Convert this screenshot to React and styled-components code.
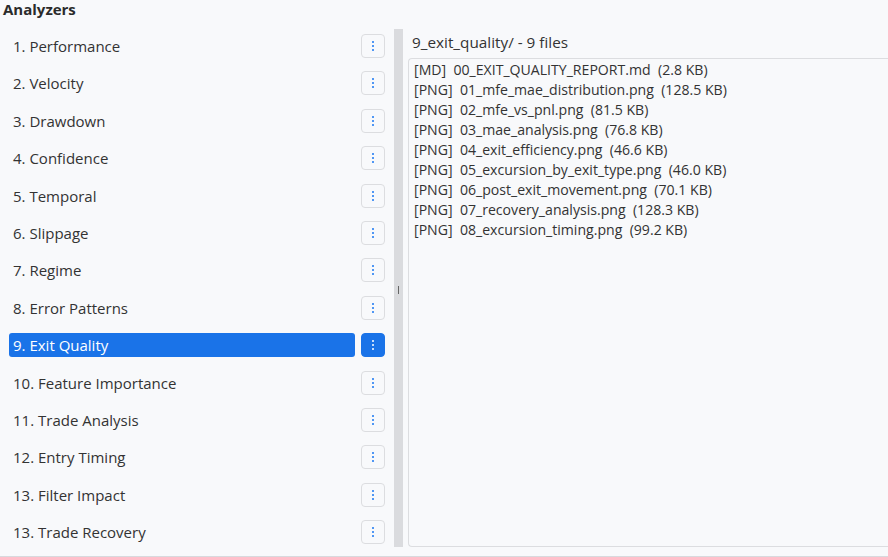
import React, { useState } from 'react';
import styled, { createGlobalStyle } from 'styled-components';

const GlobalStyle = createGlobalStyle`
    html, body { margin: 0; padding: 0; }
    body {
        background: #f8f9fb;
        font-family: "Open Sans", "Noto Sans", sans-serif;
        color: #333;
    }
`

const Page = styled.div`
    height: 557px;
    box-sizing: border-box;
    border-bottom: 1px solid #d8d9dd;
    background: #f8f9fb;
    overflow: hidden;
`

const Heading = styled.h2`
    margin: 0;
    padding: 1px 0 0 3px;
    font-size: 15px;
    font-weight: 700;
    line-height: 16px;
    height: 28px;
    color: #2b2b2b;
`

const Body = styled.div`
    display: flex;
    height: 518px;
`

const Sidebar = styled.div`
    width: 394px;
    box-sizing: border-box;
    padding: 5px 9px 0 9px;
    display: flex;
    flex-direction: column;
    gap: 13.4px;
`

const Row = styled.div`
    display: flex;
    align-items: center;
    gap: 6px;
    height: 24px;
`

const Item = styled.div`
    flex: 1;
    height: 24px;
    line-height: 24px;
    padding-left: 4px;
    border-radius: 3px;
    font-size: 15px;
    cursor: pointer;
    background: ${p => p.$active ? '#1a73e8' : 'transparent'};
    color: ${p => p.$active ? '#fff' : '#333'};
`

const MenuButton = styled.button`
    width: 24px;
    height: 24px;
    padding: 0;
    box-sizing: border-box;
    border-radius: 4px;
    border: 1px solid ${p => p.$active ? '#1a73e8' : '#dcdde0'};
    background: ${p => p.$active ? '#1a73e8' : '#f8f9fb'};
    display: flex;
    align-items: center;
    justify-content: center;
    cursor: pointer;
`

const Splitter = styled.div`
    width: 9px;
    background: #dadbde;
    display: flex;
    align-items: center;
    justify-content: center;
`

const Grip = styled.div`
    width: 1px;
    height: 8px;
    background: #666;
    margin-top: 4px;
`

const Content = styled.div`
    flex: 1;
    padding-left: 5px;
    display: flex;
    flex-direction: column;
    min-width: 0;
`

const FolderTitle = styled.div`
    height: 29px;
    line-height: 26px;
    padding-left: 4px;
    font-size: 15.3px;
    color: #333;
`

const FileBox = styled.div`
    flex: 1;
    border: 1px solid #dcdde0;
    border-right: none;
    border-radius: 4px 0 0 4px;
    padding: 1px 0 0 5px;
    background: #f8f9fb;
`

const FileLine = styled.div`
    font-size: 14.1px;
    line-height: 20px;
    white-space: pre;
    color: #333;
`

const Dots = ({ color }) => (
    <svg width="4" height="12" viewBox="0 0 4 12">
        <rect x="1.25" y="1" width="1.5" height="2" fill={color} />
        <rect x="1.25" y="5" width="1.5" height="2" fill={color} />
        <rect x="1.25" y="9" width="1.5" height="2" fill={color} />
    </svg>
)

const analyzers = [
    '1. Performance',
    '2. Velocity',
    '3. Drawdown',
    '4. Confidence',
    '5. Temporal',
    '6. Slippage',
    '7. Regime',
    '8. Error Patterns',
    '9. Exit Quality',
    '10. Feature Importance',
    '11. Trade Analysis',
    '12. Entry Timing',
    '13. Filter Impact',
    '13. Trade Recovery',
]

const files = [
    ['MD', '00_EXIT_QUALITY_REPORT.md', '2.8 KB'],
    ['PNG', '01_mfe_mae_distribution.png', '128.5 KB'],
    ['PNG', '02_mfe_vs_pnl.png', '81.5 KB'],
    ['PNG', '03_mae_analysis.png', '76.8 KB'],
    ['PNG', '04_exit_efficiency.png', '46.6 KB'],
    ['PNG', '05_excursion_by_exit_type.png', '46.0 KB'],
    ['PNG', '06_post_exit_movement.png', '70.1 KB'],
    ['PNG', '07_recovery_analysis.png', '128.3 KB'],
    ['PNG', '08_excursion_timing.png', '99.2 KB'],
]

const App = () => {
    const [selected, setSelected] = useState(8)

    return (<Page>
        <GlobalStyle />
        <Heading>Analyzers</Heading>
        <Body>
            <Sidebar>
                {analyzers.map((name, i) => {
                    const active = i === selected
                    return (
                        <Row key={i}>
                            <Item $active={active} onClick={() => setSelected(i)}>{name}</Item>
                            <MenuButton $active={active}>
                                <Dots color={active ? '#fff' : '#1877f2'} />
                            </MenuButton>
                        </Row>
                    )
                })}
            </Sidebar>
            <Splitter><Grip /></Splitter>
            <Content>
                <FolderTitle>9_exit_quality/ - 9 files</FolderTitle>
                <FileBox>
                    {files.map(([type, name, size]) => (
                        <FileLine key={name}>[{type}]  {name}  ({size})</FileLine>
                    ))}
                </FileBox>
            </Content>
        </Body>
    </Page>);
}

export default App;
